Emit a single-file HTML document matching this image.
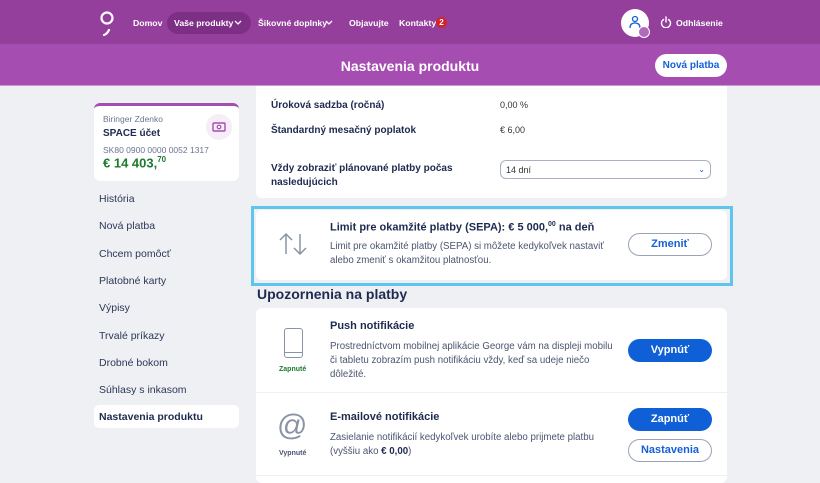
<!DOCTYPE html>
<html><head><meta charset="utf-8"><style>
*{box-sizing:border-box;margin:0;padding:0}
body{width:820px;height:483px;overflow:hidden;background:#eef0f4;font-family:"Liberation Sans",sans-serif;color:#1e2a4f;position:relative}
.abs{position:absolute;white-space:nowrap}
.nav{left:0;top:0;width:820px;height:44px;background:#953f9d}
.sub{left:0;top:44px;width:820px;height:42px;background:#a64db2;border-bottom:1px solid #c89ad0}
.nl{color:#fff;font-size:8.7px;font-weight:bold;top:18px}
.side{font-size:10.5px;color:#2c3755;left:99px}
.btn{border-radius:12px;font-size:11px;font-weight:bold;text-align:center;line-height:21px;width:84px;height:23px}
.bo{border:1px solid #9aa3b6;color:#1560d8;background:#fff}
.bf{background:#0f5fd6;color:#fff;line-height:23px}
.card{background:#fff;border-radius:6px}
.t{font-size:11px;font-weight:bold;color:#1e2a4f}
.d{font-size:9.7px;color:#4a5570}
</style></head><body>
<div class="abs nav"></div>
<div class="abs sub"></div>
<svg class="abs" style="left:98px;top:10px" width="20" height="26"><circle cx="9" cy="8" r="5.5" fill="none" stroke="#fff" stroke-width="2.2"/><path d="M11 20 Q9 24 6 25" stroke="#fff" stroke-width="2.2" fill="none" stroke-linecap="round"/></svg>
<div class="abs nl" style="left:133px">Domov</div>
<div class="abs" style="left:167px;top:12px;width:84px;height:22px;border-radius:11px;background:#7d2f86"></div>
<div class="abs nl" style="left:174px">Vaše produkty</div>
<svg class="abs" style="left:234px;top:20px" width="8" height="6"><path d="M1 1l3 3 3-3" fill="none" stroke="#fff" stroke-width="1.3"/></svg>
<div class="abs nl" style="left:258px">Šikovné doplnky</div>
<svg class="abs" style="left:325px;top:20px" width="8" height="6"><path d="M1 1l3 3 3-3" fill="none" stroke="#fff" stroke-width="1.3"/></svg>
<div class="abs nl" style="left:349px">Objavujte</div>
<div class="abs nl" style="left:399px">Kontakty</div>
<div class="abs" style="left:436px;top:17px;background:#d0252c;border-radius:6px;width:11px;height:11px;font-size:8px;text-align:center;line-height:11px;color:#fff;font-weight:bold">2</div>
<div class="abs" style="left:621px;top:9px;width:28px;height:28px;border-radius:50%;background:#fff"></div>
<svg class="abs" style="left:628px;top:15px" width="14" height="14"><circle cx="7" cy="4" r="2.5" fill="none" stroke="#1560d8" stroke-width="1.3"/><path d="M2 13 Q2 8 7 8 Q12 8 12 13" fill="none" stroke="#1560d8" stroke-width="1.3"/></svg>
<div class="abs" style="left:638px;top:26px;width:12px;height:12px;border-radius:50%;background:#b06bba;border:1.5px solid #fff"></div>
<svg class="abs" style="left:660px;top:16px" width="12" height="12"><path d="M3.5 3.5A4.5 4.5 0 1 0 8.5 3.5M6 1v5" fill="none" stroke="#fff" stroke-width="1.4" stroke-linecap="round"/></svg>
<div class="abs nl" style="left:676px">Odhlásenie</div>
<div class="abs" style="left:0;width:820px;top:58px;text-align:center;color:#fff;font-size:14px;font-weight:bold">Nastavenia produktu</div>
<div class="abs" style="left:655px;top:54px;width:72px;height:23px;border-radius:12px;background:#fff;color:#1560d8;font-size:10px;font-weight:bold;text-align:center;line-height:23px">Nová platba</div>

<div class="abs card" style="left:94px;top:103px;width:145px;height:78px;border-top:3px solid #a64db2"></div>
<div class="abs" style="left:103px;top:114px;font-size:8.5px;color:#6b7590">Biringer Zdenko</div>
<div class="abs" style="left:103px;top:128px;font-size:10px;font-weight:bold">SPACE účet</div>
<div class="abs" style="left:103px;top:145px;font-size:8.5px;color:#6b7590">SK80 0900 0000 0052 1317</div>
<div class="abs" style="left:103px;top:155px;font-size:13px;font-weight:bold;color:#1e7a2c">€ 14 403,<sup style="font-size:8px">70</sup></div>
<div class="abs" style="left:206px;top:114px;width:26px;height:26px;border-radius:50%;background:#f6eef7"></div>
<svg class="abs" style="left:212px;top:121px" width="14" height="12"><rect x="1" y="2" width="12" height="8" rx="1" fill="none" stroke="#a64db2" stroke-width="1.4"/><circle cx="7" cy="6" r="1.8" fill="none" stroke="#a64db2" stroke-width="1.2"/></svg>

<div class="abs side" style="top:193px">História</div>
<div class="abs side" style="top:220px">Nová platba</div>
<div class="abs side" style="top:248px">Chcem pomôcť</div>
<div class="abs side" style="top:275px">Platobné karty</div>
<div class="abs side" style="top:302px">Výpisy</div>
<div class="abs side" style="top:330px">Trvalé príkazy</div>
<div class="abs side" style="top:357px">Drobné bokom</div>
<div class="abs side" style="top:384px">Súhlasy s inkasom</div>
<div class="abs" style="left:94px;top:405px;width:145px;height:23px;background:#fff;border-radius:5px"></div>
<div class="abs side" style="top:411px;font-weight:bold;color:#1e2a4f">Nastavenia produktu</div>

<div class="abs" style="left:256px;top:86px;width:471px;height:112px;background:#fff;border-radius:0 0 6px 6px"></div>
<div class="abs" style="left:271px;top:100px;font-size:10px;font-weight:bold">Úroková sadzba (ročná)</div>
<div class="abs" style="left:500px;top:100px;font-size:9px;color:#333">0,00 %</div>
<div class="abs" style="left:271px;top:125px;font-size:10px;font-weight:bold">Štandardný mesačný poplatok</div>
<div class="abs" style="left:500px;top:125px;font-size:9px;color:#333">€ 6,00</div>
<div class="abs" style="left:271px;top:162px;font-size:10px;font-weight:bold;line-height:14px">Vždy zobraziť plánované platby počas<br>nasledujúcich</div>
<div class="abs" style="left:500px;top:160px;width:211px;height:19px;border:1px solid #a9b0c0;border-radius:6px;font-size:9px;padding:4px 5px;color:#333">14 dní<span style="float:right;color:#1560d8;font-size:8px">⌄</span></div>

<div class="abs" style="left:251px;top:206px;width:482px;height:80px;border:3px solid #5ec5ef;background:#eef0f4"></div>
<div class="abs card" style="left:256px;top:210px;width:471px;height:70px"></div>
<svg class="abs" style="left:278px;top:232px" width="32" height="24"><path d="M8 22V2M2 8l6-6 6 6M22 2v20M16 16l6 6 6-6" fill="none" stroke="#8a93a6" stroke-width="1.5"/></svg>
<div class="abs t" style="left:330px;top:221px">Limit pre okamžité platby (SEPA): € 5 000,<sup style="font-size:7px">00</sup> na deň</div>
<div class="abs d" style="left:330px;top:240px;line-height:14px">Limit pre okamžité platby (SEPA) si môžete kedykoľvek nastaviť<br>alebo zmeniť s okamžitou platnosťou.</div>
<div class="abs btn bo" style="left:628px;top:233px">Zmeniť</div>

<div class="abs" style="left:257px;top:286px;font-size:14px;font-weight:bold">Upozornenia na platby</div>

<div class="abs card" style="left:256px;top:308px;width:471px;height:175px"></div>
<div class="abs" style="left:256px;top:392px;width:471px;height:1px;background:#eef0f4"></div>
<div class="abs" style="left:284px;top:328px;width:19px;height:30px;border:1.5px solid #8a93a6;border-radius:3px"></div>
<div class="abs" style="left:284px;top:352px;width:19px;height:1px;background:#8a93a6"></div>
<div class="abs" style="left:279px;top:366px;font-size:7px;font-weight:bold;color:#1e7a2c">Zapnuté</div>
<div class="abs t" style="left:330px;top:320px">Push notifikácie</div>
<div class="abs d" style="left:330px;top:340px;line-height:14px">Prostredníctvom mobilnej aplikácie George vám na displeji mobilu<br>či tabletu zobrazím push notifikáciu vždy, keď sa udeje niečo<br>dôležité.</div>
<div class="abs btn bf" style="left:628px;top:339px">Vypnúť</div>

<div class="abs" style="left:277px;top:411px;font-size:30px;color:#8a93a6;line-height:30px">@</div>
<div class="abs" style="left:279px;top:450px;font-size:7px;font-weight:bold;color:#4a5570">Vypnuté</div>
<div class="abs t" style="left:330px;top:411px">E-mailové notifikácie</div>
<div class="abs d" style="left:330px;top:431px;line-height:14px">Zasielanie notifikácií kedykoľvek urobíte alebo prijmete platbu<br>(vyššiu ako <b style="color:#1e2a4f">€ 0,00</b>)</div>
<div class="abs btn bf" style="left:628px;top:408px">Zapnúť</div>
<div class="abs btn bo" style="left:628px;top:439px">Nastavenia</div>
<div class="abs" style="left:256px;top:475px;width:471px;height:1px;background:#eef0f4"></div>
</body></html>
